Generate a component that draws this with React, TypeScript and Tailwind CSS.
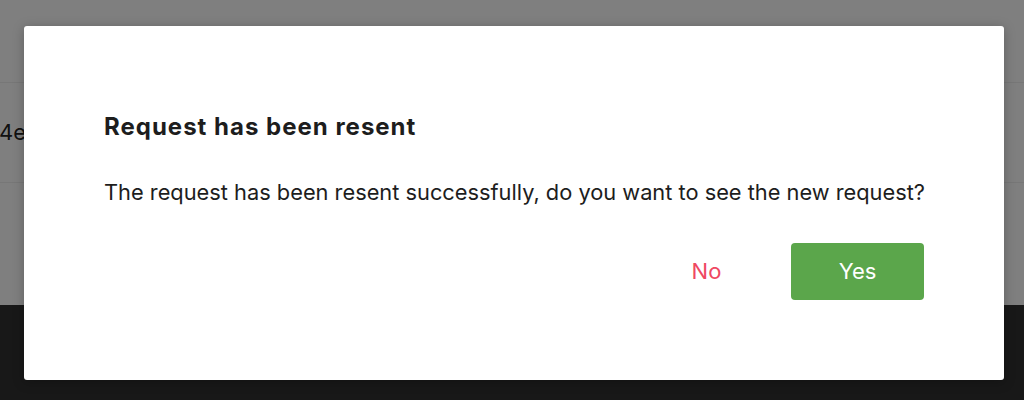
// Confirmation dialog shown after a request is resent.
// The page behind is only a faint backdrop under the overlay.

function BackgroundPage() {
  return (
    <div className="flex h-[400px] flex-col bg-white">
      <div className="h-[83px] shrink-0 border-b border-[#efefef]" />
      <div className="flex h-[100px] shrink-0 items-center border-b border-[#efefef] text-[22px] text-[#222]">
        <span className="-ml-[1px]">4e</span>
      </div>
      <div className="h-[122px] shrink-0" />
      <div className="flex-1 bg-[#303030]" />
    </div>
  );
}

export default function App() {
  return (
    <div
      className="relative h-[400px] w-[1024px] overflow-hidden"
      style={{ fontFamily: "Inter, 'Noto Sans', sans-serif" }}
    >
      <BackgroundPage />
      <div className="absolute inset-0 bg-black/50" />
      <div className="absolute left-[24px] top-[26px] flex h-[354px] w-[980px] flex-col rounded-[3px] bg-white px-[80px] pt-[86px] shadow-[0_2px_12px_rgba(0,0,0,0.25)]">
        <h2 className="text-[24px] font-bold leading-[30px] tracking-[1px] text-[#1d1d1d]">
          Request has been resent
        </h2>
        <p className="mt-[35px] whitespace-nowrap text-[21.8px] leading-[30px] text-[#1d1d1d]">
          The request has been resent successfully, do you want to see the new request?
        </p>
        <div className="mt-[36px] flex justify-end gap-[18px]">
          <button className="h-[57px] w-[133px] rounded-[4px] text-[22px] text-[#ef4862]">
            No
          </button>
          <button className="h-[57px] w-[133px] rounded-[4px] bg-[#5ba64b] text-[22px] text-white">
            Yes
          </button>
        </div>
      </div>
    </div>
  );
}
